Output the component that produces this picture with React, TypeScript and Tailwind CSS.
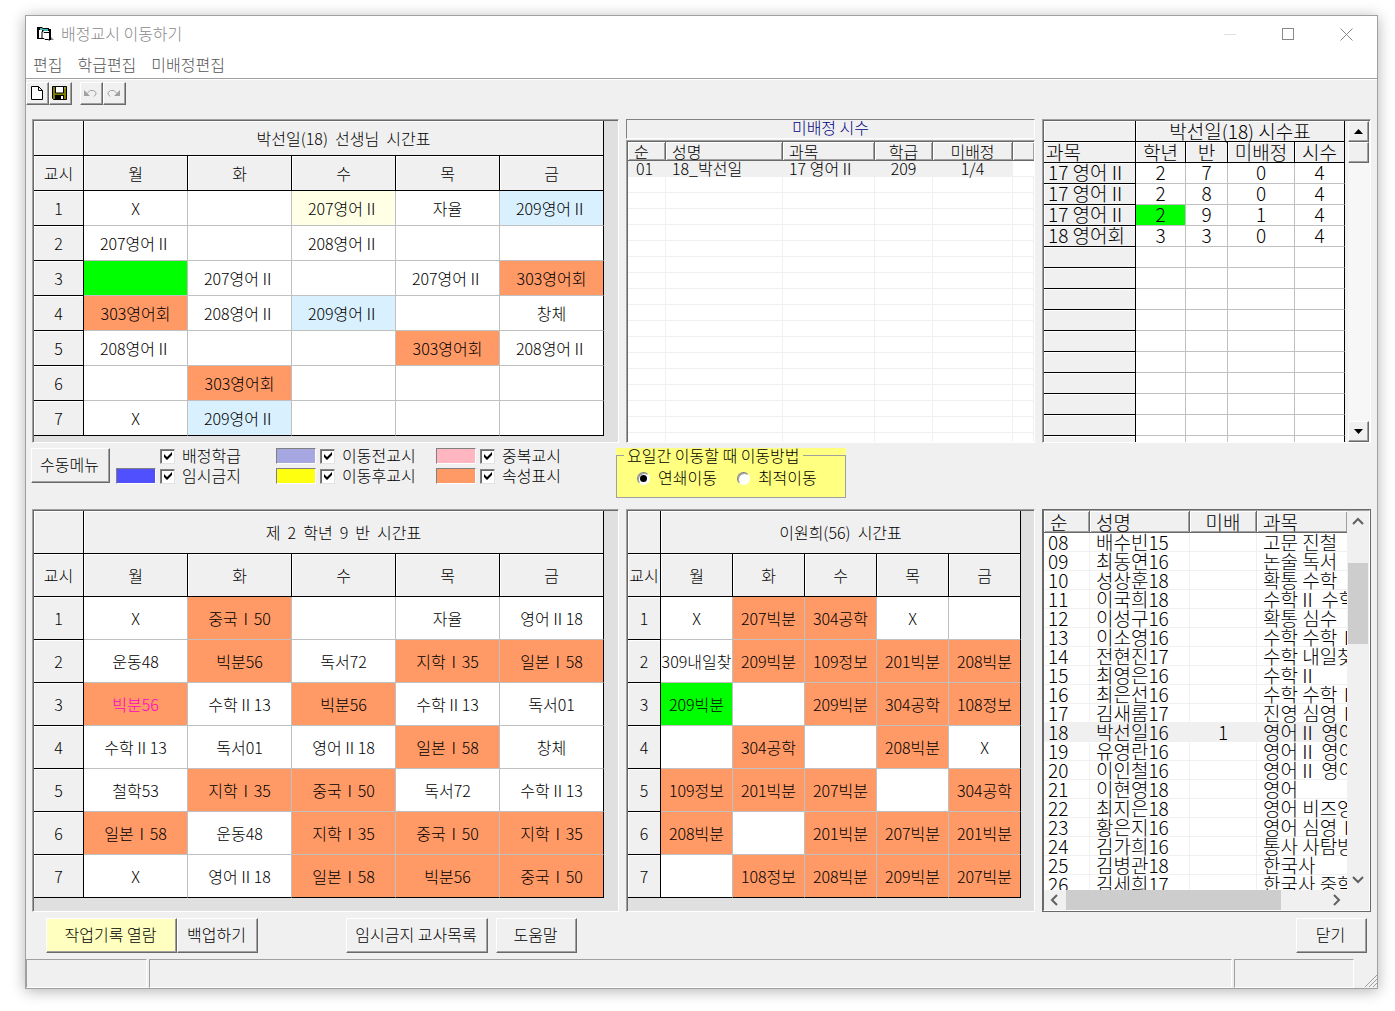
import type { ReactNode } from "react";
import clsx from "clsx";

type Tone = "orange" | "green" | "blue" | "cream" | "pink";
type Cell = string | { text: string; tone: Tone };

const o = (text: string): Cell => ({ text, tone: "orange" });
const b = (text: string): Cell => ({ text, tone: "blue" });
const g = (text: string): Cell => ({ text, tone: "green" });

const tones: Record<Tone, string> = {
    orange: "bg-[#ff9966]",
    green: "bg-[#00ff00]",
    blue: "bg-[#d9f0ff]",
    cream: "bg-[#ffffe6]",
    pink: "bg-[#ff9966] text-[#ff00c8]",
};

const days = ["월", "화", "수", "목", "금"];

const teacherRows: Cell[][] = [
    ["X", "", { text: "207영어Ⅱ", tone: "cream" }, "자율", b("209영어Ⅱ")],
    ["207영어Ⅱ", "", "208영어Ⅱ", "", ""],
    [g(""), "207영어Ⅱ", "", "207영어Ⅱ", o("303영어회")],
    [o("303영어회"), "208영어Ⅱ", b("209영어Ⅱ"), "", "창체"],
    ["208영어Ⅱ", "", "", o("303영어회"), "208영어Ⅱ"],
    ["", o("303영어회"), "", "", ""],
    ["X", b("209영어Ⅱ"), "", "", ""],
];

const classRows: Cell[][] = [
    ["X", o("중국Ⅰ50"), "", "자율", "영어Ⅱ18"],
    ["운동48", o("빅분56"), "독서72", o("지학Ⅰ35"), o("일본Ⅰ58")],
    [{ text: "빅분56", tone: "pink" }, "수학Ⅱ13", o("빅분56"), "수학Ⅱ13", "독서01"],
    ["수학Ⅱ13", "독서01", "영어Ⅱ18", o("일본Ⅰ58"), "창체"],
    ["철학53", o("지학Ⅰ35"), o("중국Ⅰ50"), "독서72", "수학Ⅱ13"],
    [o("일본Ⅰ58"), "운동48", o("지학Ⅰ35"), o("중국Ⅰ50"), o("지학Ⅰ35")],
    ["X", "영어Ⅱ18", o("일본Ⅰ58"), o("빅분56"), o("중국Ⅰ50")],
];

const otherRows: Cell[][] = [
    ["X", o("207빅분"), o("304공학"), "X", ""],
    ["309내일찾", o("209빅분"), o("109정보"), o("201빅분"), o("208빅분")],
    [g("209빅분"), "", o("209빅분"), o("304공학"), o("108정보")],
    ["", o("304공학"), "", o("208빅분"), "X"],
    [o("109정보"), o("201빅분"), o("207빅분"), "", o("304공학")],
    [o("208빅분"), "", o("201빅분"), o("207빅분"), o("201빅분")],
    ["", o("108정보"), o("208빅분"), o("209빅분"), o("207빅분")],
];

const hourRows = [
    ["17 영어Ⅱ", "2", "7", "0", "4"],
    ["17 영어Ⅱ", "2", "8", "0", "4"],
    ["17 영어Ⅱ", "2", "9", "1", "4"],
    ["18 영어회", "3", "3", "0", "4"],
];

const staff = [
    ["08", "배수빈15", "", "고문 진철"],
    ["09", "최동연16", "", "논술 독서"],
    ["10", "성상훈18", "", "확통 수학"],
    ["11", "이국희18", "", "수학Ⅱ 수학"],
    ["12", "이성구16", "", "확통 심수"],
    ["13", "이소영16", "", "수학 수학Ⅰ"],
    ["14", "전현진17", "", "수학 내일찾"],
    ["15", "최영은16", "", "수학Ⅱ"],
    ["16", "최은선16", "", "수학 수학Ⅰ"],
    ["17", "김새롬17", "", "진영 심영Ⅰ"],
    ["18", "박선일16", "1", "영어Ⅱ 영어"],
    ["19", "유영란16", "", "영어Ⅱ 영어"],
    ["20", "이인철16", "", "영어Ⅱ 영어"],
    ["21", "이현영18", "", "영어"],
    ["22", "최지은18", "", "영어 비즈영"],
    ["23", "황은지16", "", "영어 심영Ⅰ"],
    ["24", "김가희16", "", "통사 사탐방"],
    ["25", "김병관18", "", "한국사"],
    ["26", "김세희17", "", "한국사 중학"],
];

const raised = "border border-t-white border-l-white border-r-[#696969] border-b-[#696969] shadow-[inset_-1px_-1px_0_#a0a0a0]";
const headCell = "bg-[#f0f0f0] border-r border-b border-black shadow-[inset_1px_1px_0_#fff] p-0 font-light";

const Sunken = ({ children, className }: { children: ReactNode; className?: string }) => (
    <div className="min-w-0 border border-t-[#a0a0a0] border-l-[#a0a0a0] border-r-white border-b-white">
        <div className={clsx("h-full overflow-hidden border-t border-l border-[#696969]", className)}>{children}</div>
    </div>
);

interface TimetableProps {
    title: string;
    rows: Cell[][];
    rowClass: string;
    firstCol: string;
    dayCol: string;
    width: string;
}

const Timetable = ({ title, rows, rowClass, firstCol, dayCol, width }: TimetableProps) => (
    <Sunken className="bg-[#e0e0e0]">
        <table className={clsx("table-fixed border-separate border-spacing-0 text-center leading-6", width)}>
            <colgroup>
                <col className={firstCol} />
                {days.map((d) => <col key={d} className={dayCol} />)}
            </colgroup>
            <thead>
                <tr className={rowClass}>
                    <td className={headCell}></td>
                    <th colSpan={5} className={clsx(headCell, "whitespace-pre")}>{title}</th>
                </tr>
                <tr className={rowClass}>
                    <th className={clsx(headCell, "whitespace-nowrap")}>교시</th>
                    {days.map((d) => <th key={d} className={headCell}>{d}</th>)}
                </tr>
            </thead>
            <tbody>
                {rows.map((row, i) => (
                    <tr key={i} className={rowClass}>
                        <th className={headCell}>{i + 1}</th>
                        {row.map((cell, j) => {
                            const text = typeof cell === "string" ? cell : cell.text;
                            return (
                                <td
                                    key={j}
                                    className={clsx(
                                        "border-r border-b p-0",
                                        j === 4 ? "border-r-black" : "border-r-[#c0c0c0]",
                                        i === 6 ? "border-b-black" : "border-b-[#c0c0c0]",
                                        typeof cell === "string" ? "bg-white" : tones[cell.tone],
                                    )}
                                >
                                    <div className="flex justify-center overflow-hidden whitespace-nowrap">{text}</div>
                                </td>
                            );
                        })}
                    </tr>
                ))}
            </tbody>
        </table>
    </Sunken>
);

const ListHead = ({ children, className }: { children?: ReactNode; className?: string }) => (
    <th className={clsx("border-r border-b border-[#696969] bg-[#f0f0f0] p-0 font-light whitespace-nowrap shadow-[inset_1px_1px_0_#fff,inset_-1px_-1px_0_#a0a0a0] last:border-r-0", className)}>
        {children}
    </th>
);

const UnassignedList = () => {
    const line = "border-r border-b border-[#f0f0f0] p-0 whitespace-nowrap";
    return (
        <div className="flex min-w-0 flex-col gap-px">
            <h2 className="h-5 border border-t-[#808080] border-l-[#808080] border-r-white border-b-white text-center leading-[14px] text-[#000080]">
                미배정 시수
            </h2>
            <div className="grid h-[303px] grid-rows-1 *:min-h-0">
                <Sunken className="bg-white">
                    <table className="w-full table-fixed border-separate border-spacing-0 leading-[15px]">
                        <colgroup>
                            <col className="w-[38px]" />
                            <col className="w-[117px]" />
                            <col className="w-[92px]" />
                            <col className="w-[58px]" />
                            <col className="w-[80px]" />
                            <col />
                        </colgroup>
                        <thead>
                            <tr className="h-[19px]">
                                <ListHead className="pl-1.5 text-left">순</ListHead>
                                <ListHead className="pl-1.5 text-left">성명</ListHead>
                                <ListHead className="pl-1.5 text-left">과목</ListHead>
                                <ListHead>학급</ListHead>
                                <ListHead>미배정</ListHead>
                                <ListHead />
                            </tr>
                        </thead>
                        <tbody>
                            <tr className="h-4 *:bg-[#f0f0f0]">
                                <td className={clsx(line, "pl-2")}>01</td>
                                <td className={clsx(line, "pl-1.5")}>18_박선일</td>
                                <td className={clsx(line, "pl-1.5")}>17 영어Ⅱ</td>
                                <td className={clsx(line, "text-center")}>209</td>
                                <td className={clsx(line, "text-center")}>1/4</td>
                                <td className="border-b border-[#f0f0f0] bg-white! p-0"></td>
                            </tr>
                            {Array.from({ length: 17 }, (_, i) => (
                                <tr key={i} className="h-4">
                                    {Array.from({ length: 6 }, (_, j) => <td key={j} className={line}></td>)}
                                </tr>
                            ))}
                        </tbody>
                    </table>
                </Sunken>
            </div>
        </div>
    );
};

const HoursTable = () => (
    <Sunken className="flex h-full bg-[#f0f0f0]">
        <div className="h-[321px] w-[301px] shrink-0 overflow-hidden">
            <table className="w-[301px] table-fixed border-separate border-spacing-0 text-center text-[19px] leading-[18px]">
                <colgroup>
                    <col className="w-[92px]" />
                    <col className="w-[50px]" />
                    <col className="w-[42px]" />
                    <col className="w-[67px]" />
                    <col className="w-[50px]" />
                </colgroup>
                <thead>
                    <tr className="h-[21px]">
                        <td className={headCell}></td>
                        <th colSpan={4} className={headCell}>박선일(18) 시수표</th>
                    </tr>
                    <tr className="h-[21px] whitespace-nowrap">
                        <th className={clsx(headCell, "pl-0.5 text-left")}>과목</th>
                        {["학년", "반", "미배정", "시수"].map((h) => <th key={h} className={headCell}>{h}</th>)}
                    </tr>
                </thead>
                <tbody>
                    {Array.from({ length: 14 }, (_, i) => hourRows[i] ?? ["", "", "", "", ""]).map((row, i) => (
                        <tr key={i} className="h-[21px] align-top whitespace-nowrap">
                            {row.map((v, j) =>
                                j === 0 ? (
                                    <th key={j} className={clsx(headCell, "pl-1 text-left")}>{v}</th>
                                ) : (
                                    <td
                                        key={j}
                                        className={clsx(
                                            "border-r border-b border-b-[#c0c0c0] p-0",
                                            j === 4 ? "border-r-black" : "border-r-[#c0c0c0]",
                                            i === 2 && j === 1 ? "bg-[#00ff00]" : "bg-white",
                                        )}
                                    >
                                        {v}
                                    </td>
                                ),
                            )}
                        </tr>
                    ))}
                </tbody>
            </table>
        </div>
        <div className="ml-auto flex w-[22px] flex-col bg-[#f7f7f7] pr-px">
            <button aria-label="위로" className={clsx("flex h-[21px] items-center justify-center bg-[#f0f0f0]", raised)}>
                <svg width="9" height="5" viewBox="0 0 9 5"><path d="M4.500 0L9 5H0z" /></svg>
            </button>
            <div className={clsx("h-[21px] bg-[#f0f0f0]", raised)}></div>
            <button aria-label="아래로" className={clsx("mt-auto flex h-[21px] items-center justify-center bg-[#f0f0f0]", raised)}>
                <svg width="9" height="5" viewBox="0 0 9 5"><path d="M0 0h9L4.500 5z" /></svg>
            </button>
        </div>
    </Sunken>
);

const Chevron = ({ d }: { d: string }) => (
    <svg width="12" height="12" viewBox="0 0 12 12" fill="none" stroke="#606060" strokeWidth="2">
        <path d={d} />
    </svg>
);

const StaffList = () => {
    const line = "border-r border-b border-[#f0f0f0] p-0 whitespace-nowrap";
    return (
        <div className="min-w-0 border border-[#696969]">
            <div className="flex h-full border border-t-[#a0a0a0] border-l-[#696969] border-r-white border-b-white bg-[#f0f0f0]">
                <div className="flex min-w-0 flex-1 flex-col">
                    <div className="h-[379px] overflow-hidden bg-white">
                        <table className="w-full table-fixed border-separate border-spacing-0 text-[19px] leading-[18px]">
                            <colgroup>
                                <col className="w-[46px]" />
                                <col className="w-[100px]" />
                                <col className="w-[67px]" />
                                <col />
                            </colgroup>
                            <thead>
                                <tr className="h-[22px]">
                                    <ListHead className="pl-1.5 text-left">순</ListHead>
                                    <ListHead className="pl-1.5 text-left">성명</ListHead>
                                    <ListHead>미배</ListHead>
                                    <ListHead className="pl-1.5 text-left">과목</ListHead>
                                </tr>
                            </thead>
                            <tbody>
                                {staff.map(([no, name, left, subject]) => (
                                    <tr key={no} className={clsx("h-[19px]", no === "18" && "bg-[#f0f0f0]")}>
                                        <td className={clsx(line, "pl-1")}>{no}</td>
                                        <td className={clsx(line, "pl-1.5")}>{name}</td>
                                        <td className={clsx(line, "text-center")}>{left}</td>
                                        <td className={clsx(line, "border-r-0 pl-1.5")}>{subject}</td>
                                    </tr>
                                ))}
                            </tbody>
                        </table>
                    </div>
                    <div className="flex h-5 items-stretch">
                        <button aria-label="왼쪽으로" className="flex w-[22px] items-center justify-center"><Chevron d="M8 1L3 6L8 11" /></button>
                        <div className="flex-1"><div className="h-full w-[83%] bg-[#cdcdcd]"></div></div>
                        <button aria-label="오른쪽으로" className="flex w-[22px] items-center justify-center"><Chevron d="M4 1L9 6L4 11" /></button>
                    </div>
                </div>
                <div className="flex w-[22px] flex-col px-px pb-5">
                    <button aria-label="위로" className="flex h-[22px] items-center justify-center"><Chevron d="M1 8L6 3L11 8" /></button>
                    <div className="mt-[30px] h-[81px] bg-[#cdcdcd]"></div>
                    <button aria-label="아래로" className="mt-auto flex h-[22px] items-center justify-center"><Chevron d="M1 4L6 9L11 4" /></button>
                </div>
            </div>
        </div>
    );
};

const Option = ({ label, color }: { label: string; color?: string }) => (
    <div className="flex h-5 w-40 items-center">
        <span className={clsx("h-4 w-10", color && "border border-t-[#808080] border-l-[#808080] border-r-white border-b-white", color)}></span>
        <label className="relative ml-1 flex items-center">
            <input
                type="checkbox"
                defaultChecked
                className="peer size-[15px] appearance-none border border-t-[#808080] border-l-[#808080] border-r-[#e3e3e3] border-b-[#e3e3e3] bg-white shadow-[inset_1px_1px_0_#696969]"
            />
            <svg className="pointer-events-none absolute left-1 hidden peer-checked:block" width="8" height="8" viewBox="0 0 8 8">
                <path d="M0 2L3 5L8 0V3L3 8L0 5z" />
            </svg>
            <span className="ml-[7px] pb-[2px]">{label}</span>
        </label>
    </div>
);

const Radio = ({ label, checked }: { label: string; checked?: boolean }) => (
    <label className="relative flex items-center gap-2">
        <input
            type="radio"
            name="move"
            defaultChecked={checked}
            className="peer size-[13px] appearance-none rounded-full border border-t-[#808080] border-l-[#808080] border-r-white border-b-white bg-white shadow-[inset_1px_1px_0_#a0a0a0]"
        />
        <span className="pointer-events-none absolute left-1 hidden size-[5px] rounded-full bg-black ring-1 ring-black peer-checked:block"></span>
        <span className="pb-[2px]">{label}</span>
    </label>
);

const PushButton = ({ children, className }: { children: ReactNode; className: string }) => (
    <button className={clsx("h-[35px] pr-[2px] pb-1 whitespace-nowrap", raised, className)}>{children}</button>
);

export default function App() {
    const tool = clsx("flex size-[23px] items-center justify-center pr-[2px] pb-[2px]", raised);
    const status = "border border-t-[#a0a0a0] border-l-[#a0a0a0] border-r-white border-b-white";
    return (
        <div className="bg-white pt-[15px] pr-[17px] pb-[22px] pl-[25px] font-['Noto_Sans_CJK_KR','Liberation_Sans',sans-serif] text-base leading-5 font-light text-black">
            <div className="border border-[#a0a0a0] bg-[#f0f0f0] shadow-[0_2px_14px_rgba(0,0,0,0.3)]">
                <header className="flex h-9 items-center bg-white pl-[10px] text-[#8a8a8a]">
                    <svg width="18" height="16" viewBox="0 0 18 16">
                        <path d="M1 1h5l1 1h6v3H3v8H1z" />
                        <path d="M4 2h2l1 1h5v2H8L7 4H4z" fill="#40c0b8" />
                        <path d="M3 4h3v7H3z" fill="#fff" />
                        <path d="M1 12.500h5" stroke="#000" />
                        <path d="M6 5.500h1l1 1h6V14h-1l-1-.5H9l-1-1H6z" fill="#fff" stroke="#000" />
                        <path d="M14 3v11" stroke="#000" strokeWidth="2" />
                        <path d="M15 11l3 3h-3z" fill="#888" />
                    </svg>
                    <h1 className="ml-[7px] pb-[2px]">배정교시 이동하기</h1>
                    <div className="ml-auto flex items-center gap-[46px] pr-6">
                        <button aria-label="최소화" className="h-px w-3 bg-[#e0e0e0]"></button>
                        <button aria-label="최대화" className="size-3 border border-[#888]"></button>
                        <button aria-label="닫기">
                            <svg width="13" height="13" viewBox="0 0 13 13" stroke="#888"><path d="M.5.5l12 12M12.500.5l-12 12" /></svg>
                        </button>
                    </div>
                </header>
                <nav className="flex h-[27px] items-center gap-[15px] border-b border-[#a0a0a0] bg-white pb-[2px] pl-[7px] text-[#555]">
                    <button>편집</button>
                    <button>학급편집</button>
                    <button>미배정편집</button>
                </nav>
                <div className="flex h-10 border-t border-white pt-[2px]">
                    <button aria-label="새로 만들기" className={tool}>
                        <svg width="12" height="14" viewBox="0 0 12 14"><path d="M.5.5h7l4 4v9H.5zM7.500.5v4h4" fill="#fff" stroke="#000" /></svg>
                    </button>
                    <button aria-label="저장" className={tool}>
                        <svg width="15" height="14" viewBox="0 0 15 14">
                            <path d="M.5.5h14v13h-13l-1-1z" fill="#808000" stroke="#000" />
                            <path d="M3.500.5h8v6.500h-8z" fill="#fff" stroke="#000" />
                            <path d="M3 9h9v5H3z" />
                            <path d="M9 10h2v3H9zM12.500 1.500h1v1h-1z" fill="#fff" />
                        </svg>
                    </button>
                    <div className="w-2"></div>
                    <button aria-label="실행 취소" className={tool}>
                        <svg width="13" height="8" viewBox="0 0 13 8" fill="none" stroke="#a0a0a0">
                            <path d="M0 1v6h6z" fill="#a0a0a0" stroke="none" />
                            <path d="M3 4.500L6 1.500h3.500L12 3.500V5L10 7.500" />
                        </svg>
                    </button>
                    <button aria-label="다시 실행" className={tool}>
                        <svg width="13" height="8" viewBox="0 0 13 8" fill="none" stroke="#a0a0a0">
                            <path d="M13 1v6H7z" fill="#a0a0a0" stroke="none" />
                            <path d="M10 4.500L7 1.500H3.500L1 3.500V5L3 7.500" />
                        </svg>
                    </button>
                </div>

                <main className="px-1.5">
                    <div className="grid grid-cols-[587fr_409fr_329fr] gap-[7px]">
                        <Timetable title="박선일(18)  선생님  시간표" rows={teacherRows} rowClass="h-[35px]" firstCol="w-[50px]" dayCol="w-[104px]" width="w-[570px]" />
                        <UnassignedList />
                        <HoursTable />
                    </div>

                    <div className="flex h-[66px] items-start pt-[5px]">
                        <PushButton className="-ml-px w-[79px]">수동메뉴</PushButton>
                        <div className="-mt-0.5 ml-[6px] grid grid-cols-3">
                            <Option label="배정학급" />
                            <Option label="이동전교시" color="bg-[#a6a6e0]" />
                            <Option label="중복교시" color="bg-[#ffb6c1]" />
                            <Option label="임시금지" color="bg-[#5050ff]" />
                            <Option label="이동후교시" color="bg-[#ffff10]" />
                            <Option label="속성표시" color="bg-[#ff9966]" />
                        </div>
                        <div className="ml-5 h-[50px] w-[230px] bg-[#ffff80]">
                            <fieldset className="-mt-0.5 h-[52px] border border-[#a0a0a0] px-[7px]">
                                <legend className="px-[3px] leading-[18px]">요일간 이동할 때 이동방법</legend>
                                <div className="flex gap-5 pt-[3px] pl-[13px]">
                                    <Radio label="연쇄이동" checked />
                                    <Radio label="최적이동" />
                                </div>
                            </fieldset>
                        </div>
                    </div>

                    <div className="grid grid-cols-[587fr_409fr_329fr] gap-[7px] pb-[6px]">
                        <Timetable title="제  2  학년  9  반  시간표" rows={classRows} rowClass="h-[43px]" firstCol="w-[50px]" dayCol="w-[104px]" width="w-[570px]" />
                        <Timetable title="이원희(56)  시간표" rows={otherRows} rowClass="h-[43px]" firstCol="w-[33px]" dayCol="w-[72px]" width="w-[393px]" />
                        <StaffList />
                    </div>

                    <div className="flex pr-1 pb-[6px] pl-[14px]">
                        <PushButton className="w-[131px] bg-[#ffffc0]">작업기록 열람</PushButton>
                        <PushButton className="w-[81px]">백업하기</PushButton>
                        <PushButton className="ml-[88px] w-[142px]">임시금지 교사목록</PushButton>
                        <PushButton className="ml-2 w-[81px]">도움말</PushButton>
                        <PushButton className="ml-auto w-[71px]">닫기</PushButton>
                    </div>
                </main>

                <footer className="flex h-[29px] gap-[2px]">
                    <div className={clsx("w-[121px]", status)}></div>
                    <div className={clsx("flex-1", status)}></div>
                    <div className={clsx("w-[120px]", status)}></div>
                    <div className="flex w-[21px] items-end justify-end pb-px">
                        <svg width="12" height="12" viewBox="0 0 12 12" stroke="#a0a0a0"><path d="M0 12L12 0M4 12L12 4M8 12L12 8" /></svg>
                    </div>
                </footer>
            </div>
        </div>
    );
}
